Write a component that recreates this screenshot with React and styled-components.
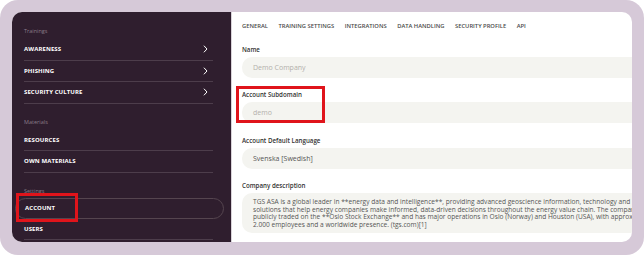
import React from 'react';
import styled, { createGlobalStyle } from 'styled-components';

const GlobalStyle = createGlobalStyle`
    html, body {
        margin: 0;
        padding: 0;
        background: #ffffff;
    }
    body {
        font-family: "Open Sans", "Liberation Sans", sans-serif;
    }
`;

const sections = [
    { title: 'Trainings', items: [
        { name: 'AWARENESS', arrow: true },
        { name: 'PHISHING', arrow: true },
        { name: 'SECURITY CULTURE', arrow: true },
    ] },
    { title: 'Materials', items: [
        { name: 'RESOURCES' },
        { name: 'OWN MATERIALS' },
    ] },
    { title: 'Settings', items: [
        { name: 'ACCOUNT', active: true },
        { name: 'USERS' },
    ] },
];

const tabs = ['GENERAL', 'TRAINING SETTINGS', 'INTEGRATIONS', 'DATA HANDLING', 'SECURITY PROFILE', 'API'];

const description = [
    'TGS ASA is a global leader in **energy data and intelligence**, providing advanced geoscience information, technology and',
    'solutions that help energy companies make informed, data-driven decisions throughout the energy value chain. The company is',
    'publicly traded on the **Oslo Stock Exchange** and has major operations in Oslo (Norway) and Houston (USA), with approximately',
    '2.000 employees and a worldwide presence. (tgs.com)[1]',
];

function Chevron() {
    return (
        <svg width="5" height="8" viewBox="0 0 5 8">
            <polyline points="1.2,1 4,4 1.2,7" fill="none" stroke="#ffffff" strokeWidth="1" strokeLinecap="round" strokeLinejoin="round" />
        </svg>
    );
}

function App() {
    return (
        <Wrapper>
            <GlobalStyle />
            <Frame>
                <Panel>
                    <Sidebar>
                        {sections.map((section) => (
                            <Section key={section.title}>
                                <SectionTitle>{section.title}</SectionTitle>
                                {section.items.map((item) => (
                                    <MenuItem key={item.name} $active={item.active}>
                                        <span>{item.name}</span>
                                        {item.arrow && <Chevron />}
                                    </MenuItem>
                                ))}
                            </Section>
                        ))}
                    </Sidebar>
                    <Main>
                        <Tabs>
                            {tabs.map((tab) => <Tab key={tab}>{tab}</Tab>)}
                        </Tabs>
                        <Field>
                            <Label>Name</Label>
                            <Input $placeholder>Demo Company</Input>
                        </Field>
                        <Field>
                            <Label>Account Subdomain</Label>
                            <Input $placeholder>demo</Input>
                        </Field>
                        <Field>
                            <Label>Account Default Language</Label>
                            <Input>Svenska [Swedish]</Input>
                        </Field>
                        <Field>
                            <Label>Company description</Label>
                            <TextArea>
                                {description.map((line, i) => <Line key={i}>{line}</Line>)}
                            </TextArea>
                        </Field>
                    </Main>
                </Panel>
                <Highlight $x={16} $y={193} $w={62} $h={29} />
                <Highlight $x={236} $y={86} $w={89} $h={37} />
            </Frame>
        </Wrapper>
    );
}

export default App;

const Wrapper = styled.div`
    width: 644px;
    height: 255px;
    overflow: hidden;
`;

const Frame = styled.div`
    position: relative;
    box-sizing: border-box;
    width: 644px;
    height: 255px;
    padding: 12px 12px 13px 12px;
    background: #d6c9d8;
    border-radius: 18px;
`;

const Panel = styled.div`
    display: flex;
    height: 230px;
    border-radius: 10px;
    overflow: hidden;
    background: #ffffff;
`;

const Sidebar = styled.nav`
    box-sizing: border-box;
    width: 220px;
    flex-shrink: 0;
    padding: 15px 18px 0 12px;
    background: #2f1e2e;
    border-right: 1px solid #d9d3d9;
`;

const Section = styled.div`
    display: flex;
    flex-direction: column;
    margin-bottom: 14px;
`;

const SectionTitle = styled.div`
    height: 8px;
    line-height: 8px;
    margin-bottom: 4px;
    font-size: 5.5px;
    color: #8a7b89;
`;

const MenuItem = styled.div`
    display: flex;
    align-items: center;
    justify-content: space-between;
    box-sizing: border-box;
    height: 21.5px;
    padding-right: 5px;
    font-size: 6px;
    font-weight: 700;
    letter-spacing: 0.1px;
    color: #ffffff;
    border-bottom: 1px solid ${(p) => (p.$active ? 'transparent' : '#4d3d4b')};
    ${(p) => p.$active && `
        margin: -1px -11px 0 -9px;
        padding-left: 9px;
        border: 1px solid #55454f;
        border-radius: 11px;
        height: 21px;
    `}
`;

const Main = styled.main`
    flex: 1;
    min-width: 0;
    overflow: hidden;
    padding: 8px 0 0 10px;
`;

const Tabs = styled.div`
    display: flex;
    gap: 10.5px;
    height: 12px;
    align-items: center;
    margin-bottom: 12.5px;
`;

const Tab = styled.div`
    font-size: 5.8px;
    font-weight: 600;
    color: #4a4a4a;
    white-space: nowrap;
`;

const Field = styled.div`
    display: flex;
    flex-direction: column;
    margin-bottom: 12.5px;
`;

const Label = styled.div`
    height: 9px;
    line-height: 9px;
    margin-bottom: 3px;
    font-size: 6.2px;
    font-weight: 600;
    color: #333333;
    white-space: nowrap;
`;

const Input = styled.div`
    box-sizing: border-box;
    width: 600px;
    height: 21px;
    padding-left: 11px;
    display: flex;
    align-items: center;
    background: #f4f4f0;
    border-radius: 10px;
    font-size: 7px;
    color: ${(p) => (p.$placeholder ? '#b3b0ab' : '#555555')};
    white-space: nowrap;
`;

const TextArea = styled.div`
    box-sizing: border-box;
    width: 600px;
    height: 40px;
    padding: 5px 11px;
    background: #f4f4f0;
    border-radius: 10px;
    overflow: hidden;
`;

const Line = styled.div`
    font-size: 6.6px;
    line-height: 7.5px;
    color: #555555;
    white-space: nowrap;
`;

const Highlight = styled.div`
    position: absolute;
    left: ${(p) => p.$x}px;
    top: ${(p) => p.$y}px;
    width: ${(p) => p.$w}px;
    height: ${(p) => p.$h}px;
    box-sizing: border-box;
    border: 3px solid #e0141b;
    pointer-events: none;
`;
